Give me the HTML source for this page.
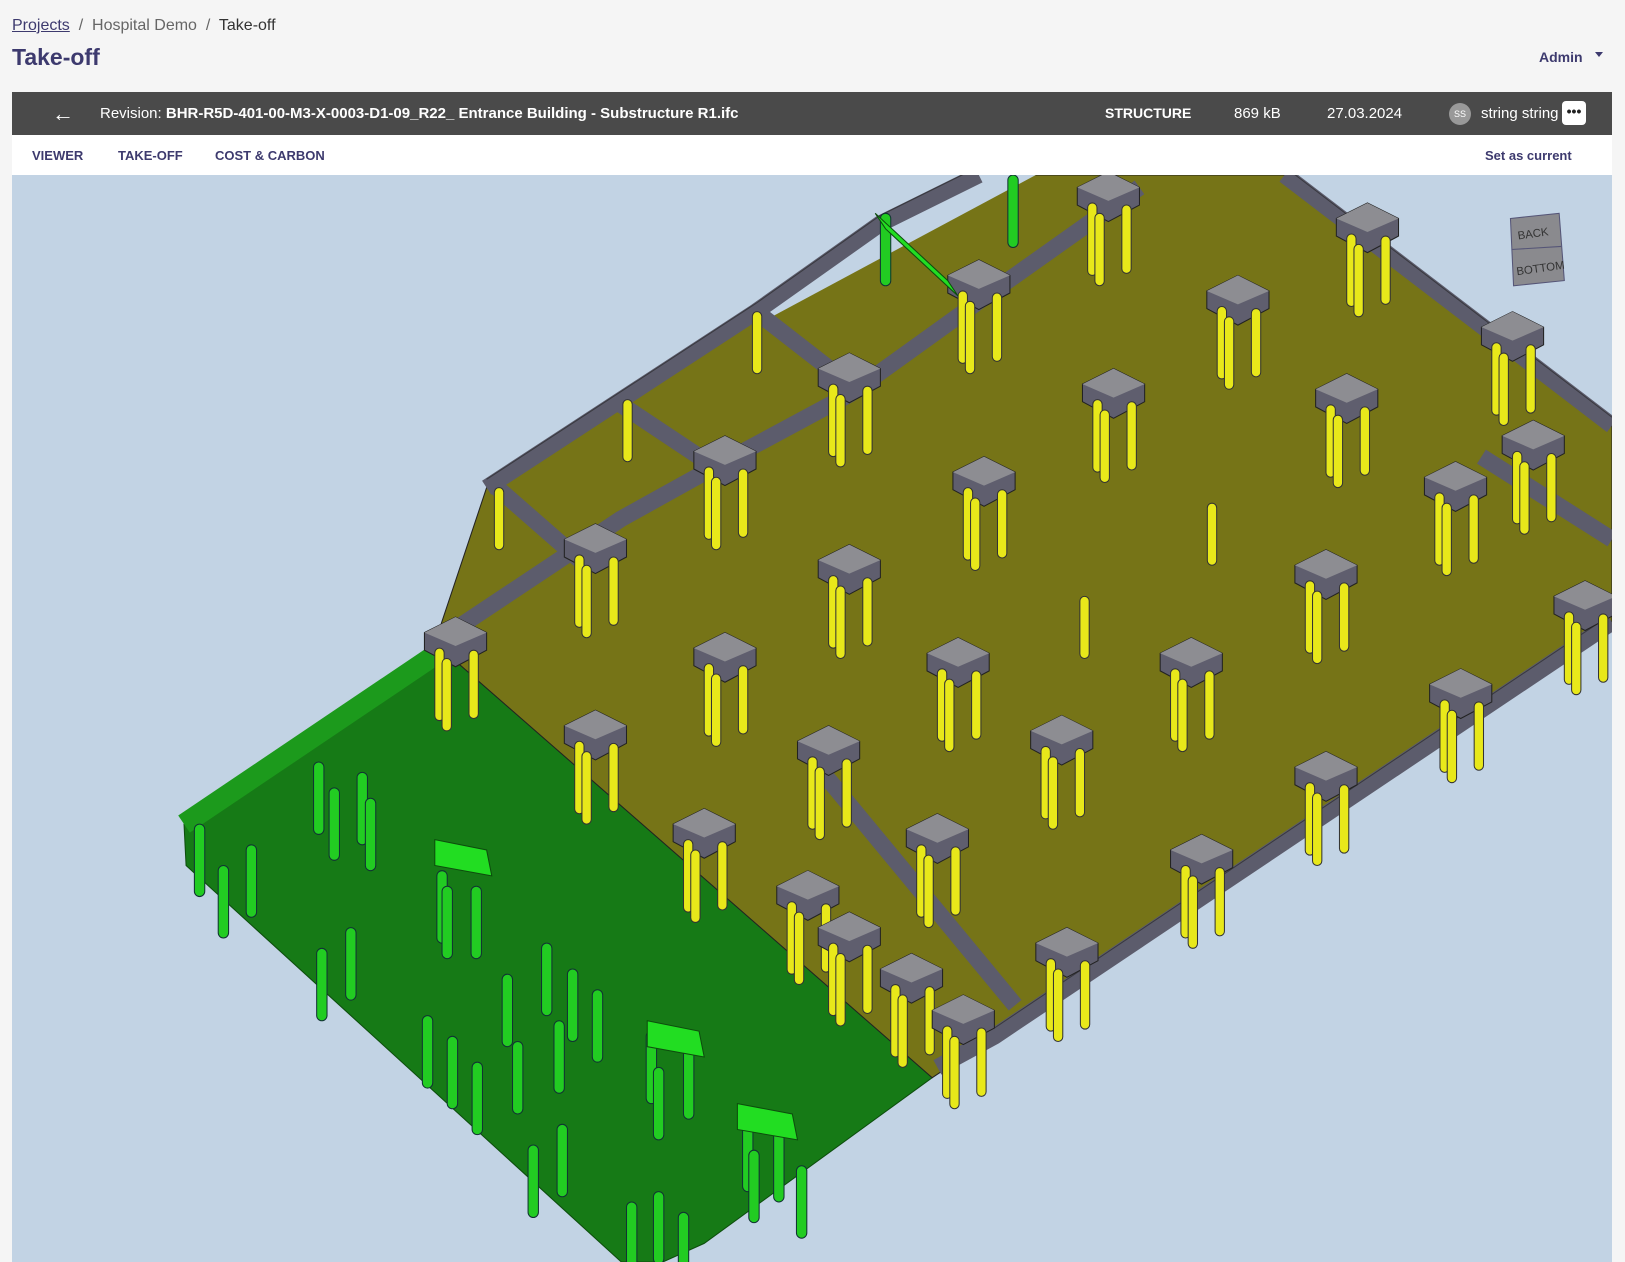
<!DOCTYPE html>
<html><head><meta charset="utf-8"><style>
body{margin:0;width:1625px;height:1262px;background:#f5f5f5;font-family:"Liberation Sans",sans-serif;overflow:hidden;position:relative}
.bc{position:absolute;left:12px;top:17px;font-size:16px;color:#666}
.bc a{color:#3d3a6e;text-decoration:underline}
.bc .cur{color:#333}
h1{position:absolute;left:12px;top:44px;margin:0;font-size:23px;color:#3d3a6e;font-weight:bold}
.admin{position:absolute;left:1539px;top:49px;font-size:14px;color:#3d3a6e;font-weight:bold}
.admin:after{content:"";display:inline-block;margin-left:12px;border:4px solid transparent;border-top:5px solid #3d3a6e;vertical-align:1px}
.bar{position:absolute;left:12px;top:92px;width:1600px;height:43px;background:#4a4a4a;color:#fff;font-size:15px}
.bar span{position:absolute;top:13px}
.tabs{position:absolute;left:12px;top:135px;width:1600px;height:40px;background:#fff;font-size:13px;font-weight:bold;color:#3d3a6e}
.tabs span{position:absolute;top:13px}
.view{position:absolute;left:12px;top:175px;width:1600px;height:1087px;background:#c2d3e4;overflow:hidden}
</style></head><body>
<div class="bc"><a>Projects</a> &nbsp;/&nbsp; Hospital Demo &nbsp;/&nbsp; <span class="cur">Take-off</span></div>
<h1>Take-off</h1>
<div class="admin">Admin</div>
<div class="bar">
<span style="left:40px;top:9px;font-size:22px">&#8592;</span>
<span style="left:88px">Revision: <b>BHR-R5D-401-00-M3-X-0003-D1-09_R22_ Entrance Building - Substructure R1.ifc</b></span>
<span style="left:1093px;font-weight:bold;font-size:14px">STRUCTURE</span>
<span style="left:1222px">869 kB</span>
<span style="left:1315px">27.03.2024</span>
<span style="left:1437px;top:11px;width:22px;height:22px;border-radius:50%;background:#999;font-size:9px;text-align:center;line-height:22px">SS</span>
<span style="left:1469px">string string</span>
<span style="left:1550px;top:9px;width:24px;height:24px;background:#fff;border-radius:4px;color:#222;font-size:14px;text-align:center;line-height:20px;font-weight:bold">&bull;&bull;&bull;</span>
</div>
<div class="tabs"><span style="left:20px">VIEWER</span><span style="left:106px">TAKE-OFF</span><span style="left:203px">COST &amp; CARBON</span><span style="left:1473px">Set as current</span></div>
<div class="view">
<svg width="1600" height="1087" viewBox="12 168 1544 1050" preserveAspectRatio="none">
<defs>
<g id="cap"><polygon points="-30,-25 0,-40 30,-25 30,-8 0,8 -30,-8" fill="#5f5e6e" stroke="#222" stroke-width="1"/><polygon points="-30,-25 0,-40 30,-25 0,-12" fill="#8d8d92"/>
<g stroke="#333" stroke-width="1" fill="#e8e81a"><rect x="-20" y="-10" width="9" height="70" rx="4.5"/><rect x="-13" y="0" width="9" height="70" rx="4.5"/><rect x="13" y="-8" width="9" height="66" rx="4.5"/></g></g>
<g id="sp" stroke="#333" stroke-width="1" fill="#e8e81a"><rect x="-4.5" y="0" width="9" height="60" rx="4.5"/></g>
<g id="gp" stroke="#133" stroke-width="1" fill="#22cc22"><rect x="-5" y="0" width="10" height="70" rx="5"/></g>
</defs>
<polygon points="178,795 430,625 900,1040 680,1200 640,1218 600,1218 180,835" fill="#167a16" stroke="#0d4d0d"/>
<polyline points="178,795 430,625" stroke="#1c9a1c" stroke-width="20" fill="none"/>
<polygon points="420,620 470,470 945,168 1240,168 1556,410 1556,600 960,1000 900,1040" fill="#767417" stroke="#222"/>
<polygon points="730,300 945,168 1000,168 745,305" fill="#c2d3e4"/>
<g stroke="#5c5c6c" stroke-width="16" fill="none" stroke-linejoin="bevel">
<polyline points="470,470 730,300 850,215 945,168"/>
<polyline points="420,620 600,500 690,450 820,380 945,290 1100,180"/>
<polyline points="480,470 560,540"/><polyline points="600,390 690,450"/><polyline points="730,300 820,370"/>
<polyline points="1240,168 1556,410"/>
<polyline points="1556,600 960,1000 905,1030"/>
<polyline points="790,740 980,970"/>
<polyline points="1430,440 1556,520"/>
</g>
<g stroke="#222" stroke-width="1" fill="none" opacity=".6">
<polyline points="470,462 730,292 850,207 945,160"/><polyline points="1240,160 1556,402"/><polyline points="1556,592 960,992"/>
</g>
<g>
<use href="#cap" x="820" y="380"/><use href="#cap" x="700" y="460"/><use href="#cap" x="575" y="545"/><use href="#cap" x="440" y="635"/>
<use href="#cap" x="945" y="290"/><use href="#cap" x="1070" y="205"/><use href="#cap" x="1320" y="235"/><use href="#cap" x="1195" y="305"/>
<use href="#cap" x="1075" y="395"/><use href="#cap" x="1300" y="400"/><use href="#cap" x="950" y="480"/><use href="#cap" x="1405" y="485"/>
<use href="#cap" x="820" y="565"/><use href="#cap" x="1280" y="570"/><use href="#cap" x="700" y="650"/><use href="#cap" x="925" y="655"/>
<use href="#cap" x="1150" y="655"/><use href="#cap" x="1530" y="600"/><use href="#cap" x="1410" y="685"/><use href="#cap" x="575" y="725"/>
<use href="#cap" x="800" y="740"/><use href="#cap" x="1025" y="730"/><use href="#cap" x="1280" y="765"/><use href="#cap" x="680" y="820"/>
<use href="#cap" x="905" y="825"/><use href="#cap" x="1160" y="845"/><use href="#cap" x="1030" y="935"/><use href="#cap" x="1460" y="340"/>
<use href="#cap" x="1480" y="445"/><use href="#cap" x="780" y="880"/><use href="#cap" x="820" y="920"/><use href="#cap" x="880" y="960"/>
<use href="#cap" x="930" y="1000"/>
<use href="#sp" x="1170" y="485"/><use href="#sp" x="1047" y="575"/><use href="#sp" x="482" y="470"/><use href="#sp" x="606" y="385"/><use href="#sp" x="731" y="300"/>
</g>
<g>
<use href="#gp" x="855" y="205"/><use href="#gp" x="978" y="168"/>
<use href="#gp" x="308" y="735"/><use href="#gp" x="323" y="760"/><use href="#gp" x="350" y="745"/><use href="#gp" x="358" y="770"/>
<use href="#gp" x="193" y="795"/><use href="#gp" x="216" y="835"/><use href="#gp" x="243" y="815"/>
<use href="#gp" x="311" y="915"/><use href="#gp" x="339" y="895"/><use href="#gp" x="427" y="840"/><use href="#gp" x="432" y="855"/><use href="#gp" x="460" y="855"/>
<use href="#gp" x="413" y="980"/><use href="#gp" x="437" y="1000"/><use href="#gp" x="461" y="1025"/><use href="#gp" x="490" y="940"/><use href="#gp" x="528" y="910"/>
<use href="#gp" x="553" y="935"/><use href="#gp" x="577" y="955"/><use href="#gp" x="500" y="1005"/><use href="#gp" x="540" y="985"/>
<use href="#gp" x="629" y="995"/><use href="#gp" x="636" y="1030"/><use href="#gp" x="665" y="1010"/>
<use href="#gp" x="515" y="1105"/><use href="#gp" x="543" y="1085"/><use href="#gp" x="722" y="1080"/><use href="#gp" x="728" y="1110"/><use href="#gp" x="752" y="1090"/><use href="#gp" x="774" y="1125"/>
<use href="#gp" x="610" y="1160"/><use href="#gp" x="636" y="1150"/><use href="#gp" x="660" y="1170"/>
</g>
<g fill="#22dd22" stroke="#0d4d0d">
<polygon points="420,810 470,820 475,845 420,835"/><polygon points="625,985 675,995 680,1020 625,1010"/><polygon points="712,1065 765,1075 770,1100 712,1090"/>
<polygon points="845,205 915,270 925,285 855,220"/>
</g>
<g transform="translate(1483,240)"><polygon points="-25,-30 22,-35 27,30 -22,35" fill="#8a8a8e" stroke="#557"/><line x1="-24" y1="0" x2="24" y2="-3" stroke="#557"/><text x="-16" y="-12" font-size="11" fill="#333" transform="rotate(-8)">BACK</text><text x="-22" y="22" font-size="11" fill="#333" transform="rotate(-8)">BOTTOM</text></g>
</svg>
</div>
</body></html>
